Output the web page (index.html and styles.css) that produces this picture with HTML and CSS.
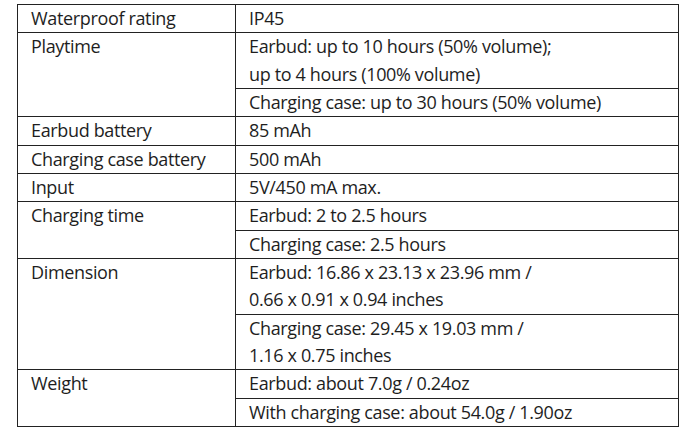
FILE: index.html
```html
<!DOCTYPE html>
<html>
<head>
<meta charset="utf-8">
<link rel="stylesheet" href="styles.css">
</head>
<body>
<table class="spec">
  <colgroup><col class="c1"><col class="c2"></colgroup>
  <tr><td>Waterproof rating</td><td>IP45</td></tr>
  <tr><td rowspan="2">Playtime</td><td>Earbud: up to 10 hours (50% volume);<br>up to 4 hours (100% volume)</td></tr>
  <tr><td>Charging case: up to 30 hours (50% volume)</td></tr>
  <tr><td>Earbud battery</td><td>85 mAh</td></tr>
  <tr><td>Charging case battery</td><td>500 mAh</td></tr>
  <tr><td>Input</td><td>5V/450 mA max.</td></tr>
  <tr><td rowspan="2">Charging time</td><td>Earbud: 2 to 2.5 hours</td></tr>
  <tr><td>Charging case: 2.5 hours</td></tr>
  <tr><td rowspan="2">Dimension</td><td>Earbud: 16.86 x 23.13 x 23.96 mm /<br>0.66 x 0.91 x 0.94 inches</td></tr>
  <tr><td>Charging case: 29.45 x 19.03 mm /<br>1.16 x 0.75 inches</td></tr>
  <tr><td rowspan="2">Weight</td><td>Earbud: about 7.0g / 0.24oz</td></tr>
  <tr><td>With charging case: about 54.0g / 1.90oz</td></tr>
</table>
</body>
</html>
```
FILE: styles.css
```css
html, body {
  margin: 0;
  background: #ffffff;
}
body {
  padding: 4px 0 0 17px;
}
.spec {
  border-collapse: collapse;
  width: 662px;
  table-layout: fixed;
  font-family: "Open Sans", sans-serif;
  font-size: 18px;
  letter-spacing: -0.35px;
  color: #1e1e1e;
}
.c1 { width: 218px; }
.spec td {
  border: 1px solid #222222;
  padding: 0 13px;
  line-height: 27.33px;
  vertical-align: top;
  white-space: nowrap;
}
```
